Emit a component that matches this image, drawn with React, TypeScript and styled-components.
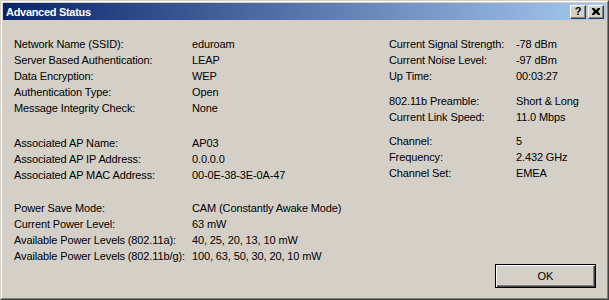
import React from 'react'
import styled, { createGlobalStyle } from 'styled-components'

const GlobalStyle = createGlobalStyle`
    html, body {
        margin: 0;
        padding: 0;
        background: #d4d0c8;
    }
    body {
        font-family: "Liberation Sans", Arial, sans-serif;
        font-size: 11px;
        color: #000;
    }
`

const Window = styled.div`
    box-sizing: border-box;
    width: 609px;
    height: 300px;
    background: #d4d0c8;
    border: 1px solid;
    border-color: #d4d0c8 #404040 #404040 #d4d0c8;
`
const Frame = styled.div`
    box-sizing: border-box;
    height: 100%;
    border: 1px solid;
    border-color: #ffffff #808080 #808080 #ffffff;
    padding: 1px;
    display: flex;
    flex-direction: column;
`
const TitleBar = styled.div`
    height: 18px;
    display: flex;
    align-items: center;
    justify-content: space-between;
    padding: 0 2px 0 3px;
    background: linear-gradient(to right, #0a246a, #a6caf0);
`
const Title = styled.div`
    color: #fff;
    font-weight: bold;
    font-size: 11px;
    letter-spacing: -0.3px;
`
const TitleButtons = styled.div`
    display: flex;
    gap: 2px;
`
const TitleButton = styled.div`
    box-sizing: border-box;
    width: 16px;
    height: 14px;
    background: #d4d0c8;
    border: 1px solid;
    border-color: #ffffff #404040 #404040 #ffffff;
    box-shadow: inset -1px -1px 0 #808080;
    display: flex;
    align-items: center;
    justify-content: center;
    font-weight: bold;
    font-size: 11px;
    line-height: 1;
    padding-bottom: 1px;
`
const Body = styled.div`
    flex: 1;
    display: flex;
    flex-direction: column;
    padding: 16px 10px 9px 11px;
`
const Columns = styled.div`
    display: flex;
    flex: 1;
`
const Column = styled.div<{ $width?: number }>`
    display: flex;
    flex-direction: column;
    width: ${p => p.$width ? `${p.$width}px` : 'auto'};
`
const Group = styled.div<{ $gap: number }>`
    margin-bottom: ${p => p.$gap}px;
`
const Row = styled.div<{ $label: number }>`
    display: grid;
    grid-template-columns: ${p => p.$label}px auto;
    height: 16px;
    line-height: 16px;
    white-space: nowrap;
    letter-spacing: -0.12px;
`
const Footer = styled.div`
    display: flex;
    justify-content: flex-end;
`
const OkButton = styled.button`
    box-sizing: border-box;
    width: 101px;
    height: 24px;
    margin: 0;
    padding: 0;
    background: #d4d0c8;
    border: 1px solid #000;
    box-shadow: inset 1px 1px 0 #ffffff, inset -1px -1px 0 #404040, inset -2px -2px 0 #808080;
    font-family: "Liberation Sans", Arial, sans-serif;
    font-size: 11px;
    color: #000;
`

const left = [
    [
        ['Network Name (SSID):', 'eduroam'],
        ['Server Based Authentication:', 'LEAP'],
        ['Data Encryption:', 'WEP'],
        ['Authentication Type:', 'Open'],
        ['Message Integrity Check:', 'None'],
    ],
    [
        ['Associated AP Name:', 'AP03'],
        ['Associated AP IP Address:', '0.0.0.0'],
        ['Associated AP MAC Address:', '00-0E-38-3E-0A-47'],
    ],
    [
        ['Power Save Mode:', 'CAM (Constantly Awake Mode)'],
        ['Current Power Level:', '63 mW'],
        ['Available Power Levels (802.11a):', '40, 25, 20, 13, 10 mW'],
        ['Available Power Levels (802.11b/g):', '100, 63, 50, 30, 20, 10 mW'],
    ],
]
const leftGaps = [19, 17, 0]

const right = [
    [
        ['Current Signal Strength:', '-78 dBm'],
        ['Current Noise Level:', '-97 dBm'],
        ['Up Time:', '00:03:27'],
    ],
    [
        ['802.11b Preamble:', 'Short & Long'],
        ['Current Link Speed:', '11.0 Mbps'],
    ],
    [
        ['Channel:', '5'],
        ['Frequency:', '2.432 GHz'],
        ['Channel Set:', 'EMEA'],
    ],
]
const rightGaps = [9, 8, 0]

const CloseIcon = () => (
    <svg width="8" height="7" viewBox="0 0 8 7">
        <path d="M0 0h2l2 2 2-2h2v1L6 3.5 8 6v1H6L4 5 2 7H0V6l2-2.5L0 1z" fill="#000" />
    </svg>
)

const App = () => {
    const renderGroups = (groups: string[][][], gaps: number[], label: number) => {
        return groups.map((rows, idx) => (
            <Group key={idx} $gap={gaps[idx]}>
                {rows.map(([name, value]) => (
                    <Row key={name} $label={label}>
                        <span>{name}</span>
                        <span>{value}</span>
                    </Row>
                ))}
            </Group>
        ))
    }

    return (
        <>
            <GlobalStyle />
            <Window>
                <Frame>
                    <TitleBar>
                        <Title>Advanced Status</Title>
                        <TitleButtons>
                            <TitleButton>?</TitleButton>
                            <TitleButton><CloseIcon /></TitleButton>
                        </TitleButtons>
                    </TitleBar>
                    <Body>
                        <Columns>
                            <Column $width={375}>
                                {renderGroups(left, leftGaps, 178)}
                            </Column>
                            <Column>
                                {renderGroups(right, rightGaps, 127)}
                            </Column>
                        </Columns>
                        <Footer>
                            <OkButton>OK</OkButton>
                        </Footer>
                    </Body>
                </Frame>
            </Window>
        </>
    )
}

export default App
